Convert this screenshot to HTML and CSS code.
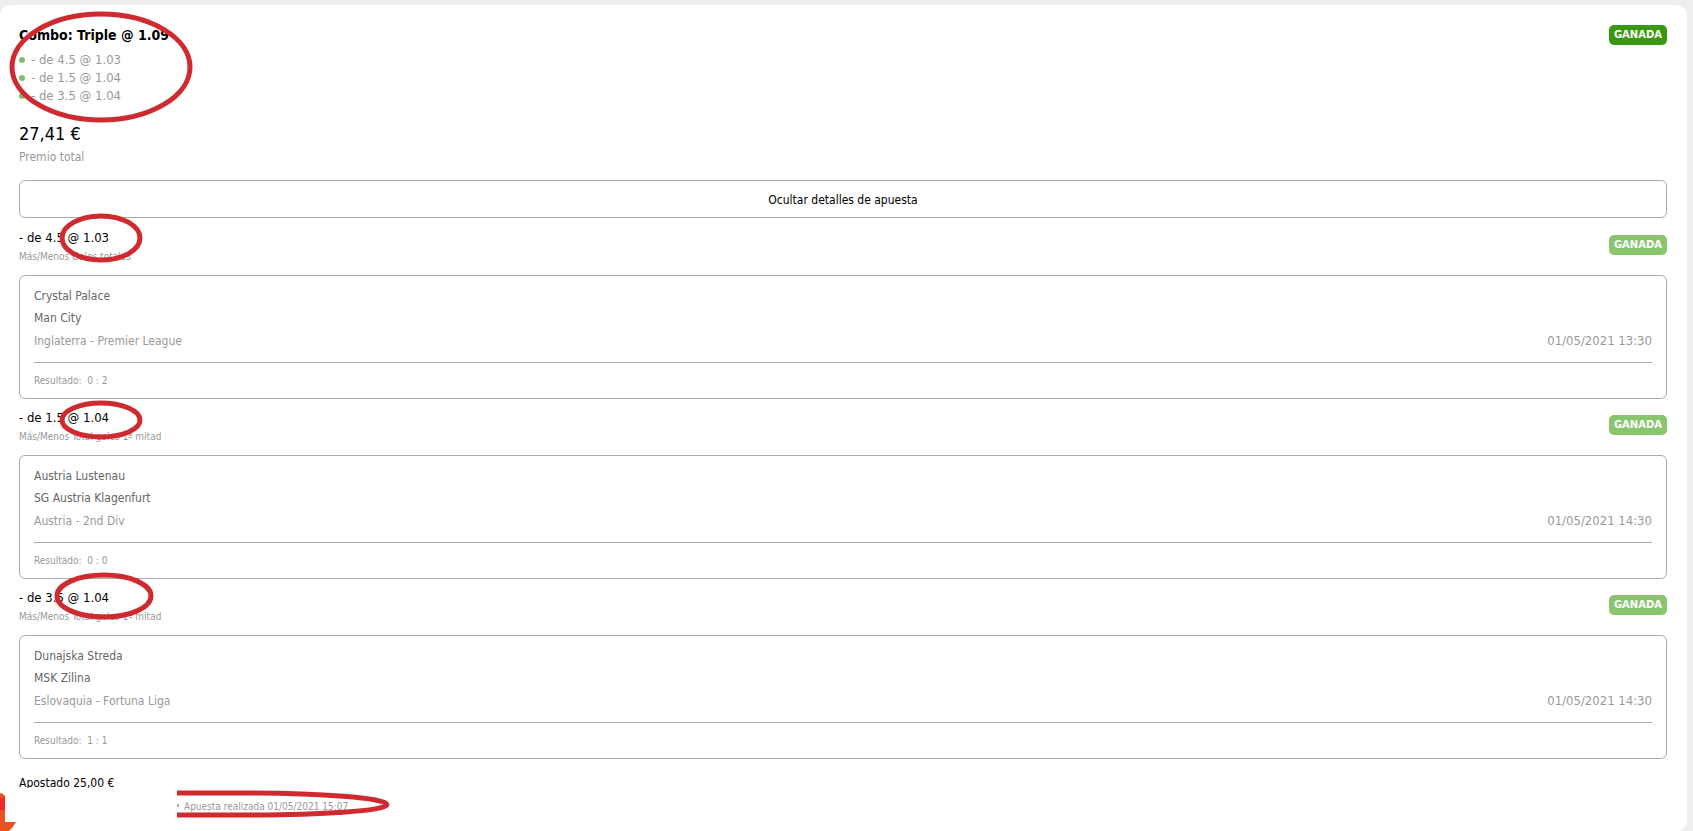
FILE: index.html
```html
<!DOCTYPE html>
<html lang="es">
<head>
  <meta charset="UTF-8">
  <meta name="viewport" content="width=device-width, initial-scale=1.0">
  <title>Detalles de apuesta</title>
  <link rel="stylesheet" href="styles.css">
</head>
<body>
  <main class="card">
    <header class="summary">
      <div>
        <h1>Combo: Triple @ 1.09</h1>
        <ul class="picks">
          <li>- de 4.5 @ 1.03</li>
          <li>- de 1.5 @ 1.04</li>
          <li>- de 3.5 @ 1.04</li>
        </ul>
      </div>
      <span class="badge badge-total">GANADA</span>
    </header>

    <div class="prize">27,41 €</div>
    <div class="prize-label">Premio total</div>

    <button class="toggle" type="button">Ocultar detalles de apuesta</button>

    <section class="leg">
      <div class="leg-head">
        <div>
          <h2>- de 4.5 @ 1.03</h2>
          <p class="market">Más/Menos Goles totales</p>
        </div>
        <span class="badge">GANADA</span>
      </div>
      <div class="match">
        <div class="team">Crystal Palace</div>
        <div class="team">Man City</div>
        <div class="league"><span>Inglaterra - Premier League</span><time>01/05/2021 13:30</time></div>
        <div class="result">Resultado:&nbsp; 0 : 2</div>
      </div>
    </section>

    <section class="leg">
      <div class="leg-head">
        <div>
          <h2>- de 1.5 @ 1.04</h2>
          <p class="market">Más/Menos Total goles 1ª mitad</p>
        </div>
        <span class="badge">GANADA</span>
      </div>
      <div class="match">
        <div class="team">Austria Lustenau</div>
        <div class="team">SG Austria Klagenfurt</div>
        <div class="league"><span>Austria - 2nd Div</span><time>01/05/2021 14:30</time></div>
        <div class="result">Resultado:&nbsp; 0 : 0</div>
      </div>
    </section>

    <section class="leg">
      <div class="leg-head">
        <div>
          <h2>- de 3.5 @ 1.04</h2>
          <p class="market">Más/Menos Total goles 1ª mitad</p>
        </div>
        <span class="badge">GANADA</span>
      </div>
      <div class="match">
        <div class="team">Dunajska Streda</div>
        <div class="team">MSK Zilina</div>
        <div class="league"><span>Eslovaquia - Fortuna Liga</span><time>01/05/2021 14:30</time></div>
        <div class="result">Resultado:&nbsp; 1 : 1</div>
      </div>
    </section>

    <div class="stake">Apostado 25,00 €</div>
    <div class="placed">Apuesta realizada 01/05/2021 15:07</div>

    <!-- red pen marks over the odds, white patch and logo in the corner -->
    <svg class="marks" width="400" height="826" viewBox="0 5 400 826" aria-hidden="true">
      <rect x="5" y="788" width="172" height="43" fill="#fff"/>
      <g fill="none" stroke="#cf2a30" stroke-width="5">
        <ellipse cx="101" cy="67" rx="89" ry="53"/>
        <ellipse cx="101" cy="238" rx="39" ry="22"/>
        <ellipse cx="101" cy="420" rx="39" ry="17"/>
        <ellipse cx="104" cy="596" rx="47" ry="21"/>
        <path d="M177 793H240C320 793 387 798 387 804.500C387 811 320 815 240 815H177"/>
      </g>
      <rect x="177" y="804" width="2" height="3" fill="#aaa"/>
      <path d="M0 793Q3 793 5 796V822H16Q13 828 9 831H0Z" fill="#e8531f"/>
      <path d="M0 799L5 797V810H0Z" fill="#f02a2a"/>
    </svg>
  </main>
</body>
</html>
```
FILE: styles.css
```css
* {
  box-sizing: border-box;
}

body {
  margin: 0;
  padding: 5px 6px 0 0;
  background: #eeeeee;
  color: #000;
  font-family: "DejaVu Sans Condensed", "DejaVu Sans", sans-serif;
  font-stretch: condensed;
  font-size: 12px;
  line-height: 18px;
}

.card {
  position: relative;
  min-height: calc(100vh - 5px);
  padding: 20px 20px 0 19px;
  background: #fff;
  border-radius: 10px;
}

h1,
h2,
p,
ul {
  margin: 0;
  padding: 0;
}

.summary,
.leg-head,
.league {
  display: flex;
  justify-content: space-between;
  align-items: flex-start;
}

h1 {
  font-size: 14px;
  line-height: 20px;
}

.picks {
  margin-top: 6px;
  list-style: none;
  color: #999;
  font-size: 13px;
}

.picks li {
  display: flex;
  align-items: center;
  gap: 6px;
}

.picks li::before {
  content: "";
  width: 6px;
  height: 6px;
  border-radius: 50%;
  background: #86bc72;
}

.badge {
  padding: 0 5px;
  border-radius: 5px;
  background: #89c46f;
  color: #fff;
  font-family: "DejaVu Sans", sans-serif;
  font-stretch: normal;
  font-size: 10px;
  font-weight: bold;
  line-height: 20px;
}

.badge-total {
  background: #3a980f;
}

.prize {
  margin-top: 17px;
  font-size: 18px;
  line-height: 24px;
}

.prize-label {
  margin-top: 2px;
  color: #999;
}

.toggle {
  display: block;
  width: 100%;
  height: 38px;
  margin: 14px 0 1px;
  padding-top: 2px;
  border: 1px solid #aaa;
  border-radius: 6px;
  background: #fff;
  color: #000;
  font: inherit;
  cursor: pointer;
}

.leg-head {
  height: 56px;
  padding-top: 10px;
}

.leg-head .badge {
  margin-top: 6px;
}

h2 {
  font-size: 13px;
  font-weight: normal;
}

.market {
  color: #999;
  font-size: 10px;
  line-height: 20px;
}

.match {
  padding: 9px 14px 8px;
  border: 1px solid #aaa;
  border-radius: 6px;
}

.team {
  color: #666;
  line-height: 22px;
}

.league {
  color: #999;
  line-height: 24px;
}

.league time {
  font-size: 13px;
}

.result {
  margin-top: 9px;
  padding-top: 9px;
  border-top: 1px solid #aaa;
  color: #999;
  font-size: 10px;
}

.stake {
  margin-top: 15px;
}

.placed {
  margin-top: 6px;
  padding-left: 165px;
  color: #999;
  font-size: 10px;
}

.marks {
  position: absolute;
  top: 0;
  left: 0;
  pointer-events: none;
}
```
